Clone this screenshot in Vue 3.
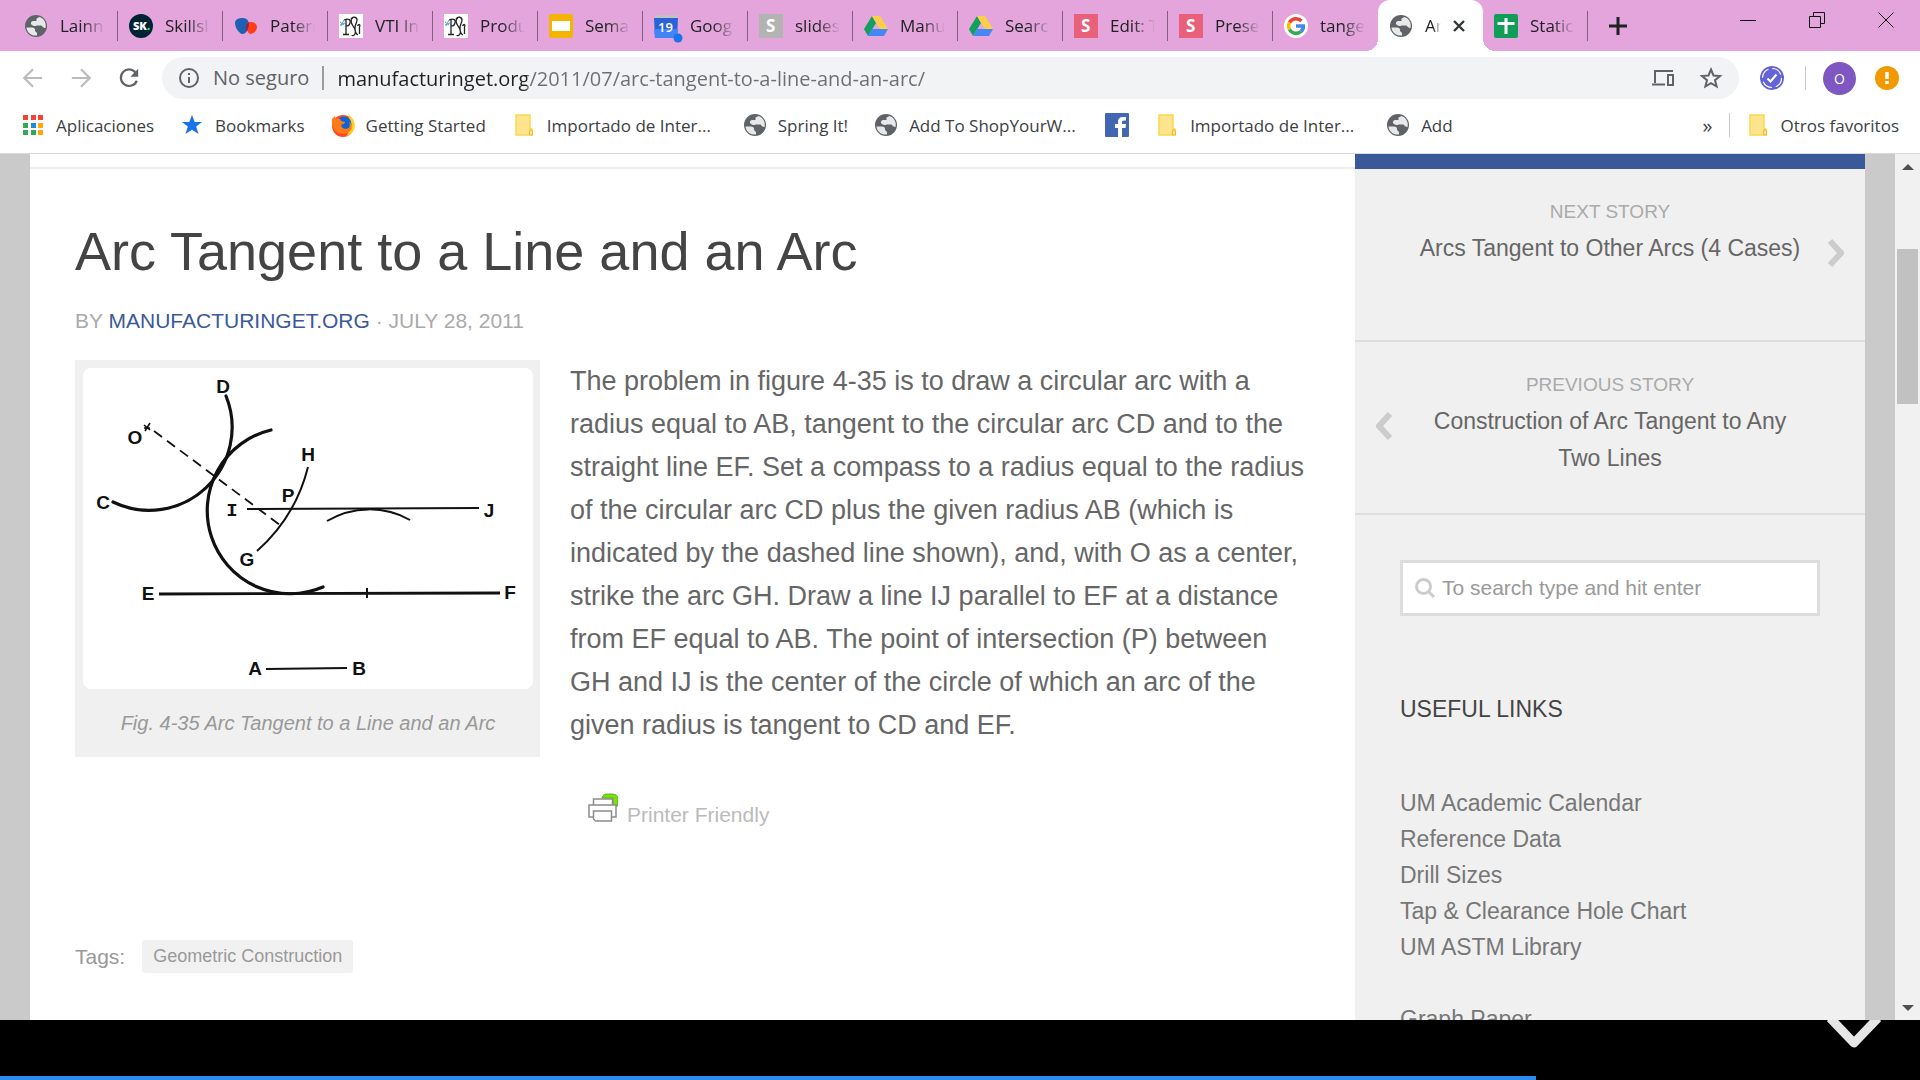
<template>
    <div class="screen">
        <header class="browser">
            <div class="tab-strip">
                <div v-for="(tab, i) in tabs" :key="i" class="tab" :class="{ active: tab.active, 'no-line': tab.noLine }">
                    <button class="tab-main">
                        <svg class="icon" viewBox="0 0 24 24"><use :href="'#i-' + tab.icon" /></svg>
                        <span class="tab-title">{{ tab.title }}</span>
                    </button>
                    <button v-if="tab.active" class="tab-close" aria-label="Cerrar">
                        <svg viewBox="0 0 12 12" width="12" height="12" stroke="#333639" stroke-width="2.4"><path d="M1 1l10 10M11 1L1 11" /></svg>
                    </button>
                </div>
                <button class="new-tab" aria-label="Nueva pestaña">
                    <svg viewBox="0 0 18 18" width="18" height="18" stroke="#202124" stroke-width="3"><path d="M9 0v18M0 9h18" /></svg>
                </button>
                <div class="window-buttons">
                    <button aria-label="Minimizar"><svg viewBox="0 0 16 16"><path d="M0 8.5h16" /></svg></button>
                    <button aria-label="Restaurar"><svg viewBox="0 0 16 16"><path d="M.5 4.5h11v11H.5zM4.500 4V.5h11v11H12" /></svg></button>
                    <button aria-label="Cerrar"><svg viewBox="0 0 16 16"><path d="M.5 .5l15 15M15.500 .5l-15 15" /></svg></button>
                </div>
            </div>

            <div class="toolbar">
                <button class="nav" aria-label="Atrás">
                    <svg viewBox="0 0 24 24" stroke="#b9bbbd"><path d="M22 12H3M12 2.500L2.500 12l9.500 9.500" /></svg>
                </button>
                <button class="nav" aria-label="Adelante">
                    <svg viewBox="0 0 24 24" stroke="#b9bbbd"><path d="M2 12h19M12 2.500l9.500 9.500-9.500 9.500" /></svg>
                </button>
                <button class="nav" aria-label="Recargar">
                    <svg viewBox="0 0 24 24" stroke="#5f6368" stroke-width="2.600">
                        <path d="M19.500 6.500A9 9 0 1 0 20.500 15" />
                        <path d="M22 2v8.500h-8.500z" fill="#5f6368" stroke="none" />
                    </svg>
                </button>
                <div class="omnibox">
                    <svg class="info" viewBox="0 0 24 24" fill="none" stroke="#5f6368" stroke-width="2">
                        <circle cx="12" cy="12" r="9" /><path d="M12 11v6M12 7v2" />
                    </svg>
                    <label class="secure" for="url">No seguro</label>
                    <input id="url" class="url" type="text" value="manufacturinget.org/2011/07/arc-tangent-to-a-line-and-an-arc/" />
                    <button class="plain" aria-label="Enviar a tus dispositivos">
                        <svg viewBox="0 0 24 24" fill="none" stroke="#5f6368" stroke-width="2">
                            <path d="M22 5H4v12M1 18.500h13" /><path d="M17 9h5v10h-5z" />
                        </svg>
                    </button>
                    <button class="plain" aria-label="Favorito">
                        <svg viewBox="0 0 24 24" fill="none" stroke="#5f6368" stroke-width="2">
                            <path d="M12 3.500l2.500 6 6.500.5-5 4.200 1.600 6.300L12 17.100l-5.600 3.400L8 14.200 3 10l6.500-.5z" />
                        </svg>
                    </button>
                </div>
                <button class="plain ext" aria-label="Extensión">
                    <svg viewBox="0 0 24 24" fill="none">
                        <circle cx="12" cy="12" r="12" fill="#6464d8" />
                        <circle cx="12" cy="12" r="9.500" stroke="#fff" stroke-width="1.200" stroke-dasharray="11 3.900" />
                        <path d="M7.500 12.500l3 3 6-7" stroke="#fff" stroke-width="2.200" />
                    </svg>
                </button>
                <span class="divider"></span>
                <button class="avatar">O</button>
                <button class="plain alert" aria-label="Actualizar">
                    <svg viewBox="0 0 24 24"><circle cx="12" cy="12" r="12" fill="#f29900" /><path d="M12 6v7M12 15v3" stroke="#fff" stroke-width="3.500" /></svg>
                </button>
            </div>

            <nav class="bookmarks">
                <a v-for="(mark, i) in bookmarks" :key="i" href="#" :class="{ cut: mark.cut }">
                    <svg class="icon" viewBox="0 0 24 24"><use :href="'#i-' + mark.icon" /></svg>
                    <span v-if="mark.title">{{ mark.title }}</span>
                </a>
                <div class="others">
                    <button class="more" aria-label="Más marcadores">»</button>
                    <span class="divider"></span>
                    <a href="#">
                        <svg class="icon" viewBox="0 0 24 24"><use href="#i-folder" /></svg>
                        <span>Otros favoritos</span>
                    </a>
                </div>
            </nav>
        </header>

        <div class="viewport">
            <div class="page">
                <main class="content">
                    <article>
                        <h1>Arc Tangent to a Line and an Arc</h1>
                        <p class="byline">BY <a href="#">MANUFACTURINGET.ORG</a> · JULY 28, 2011</p>
                        <div class="entry">
                            <figure>
                                <svg class="drawing" viewBox="0 0 450 321" fill="none" stroke="#111">
                                    <g stroke-width="3.200" stroke-linecap="round">
                                        <path d="M143 28A83 83 0 0 1 30 134" />
                                        <path d="M188 62A83 83 0 1 0 240 219" />
                                    </g>
                                    <path d="M76 226L417 225" stroke-width="2.800" />
                                    <path d="M284 220v10" stroke-width="2" />
                                    <g stroke-width="2">
                                        <path d="M225 99A166 166 0 0 1 174 183" />
                                        <path d="M164 141L396 140" />
                                        <path d="M183 301L264 300" />
                                        <path d="M244 153A83 83 0 0 1 327 152" />
                                    </g>
                                    <path d="M71 63L197 157" stroke-width="1.800" stroke-dasharray="10 6.200" />
                                    <path d="M61 57l6 5M67 55l-5 8M61 60h6" stroke-width="1.600" />
                                    <g class="points">
                                        <text v-for="p in points" :key="p.name" :x="p.x" :y="p.y + 7" :class="{ serif: p.name === 'I' }">{{ p.name }}</text>
                                    </g>
                                </svg>
                                <figcaption>Fig. 4-35 Arc Tangent to a Line and an Arc</figcaption>
                            </figure>
                            <div class="text">
                                <p>
                                    The problem in figure 4-35 is to draw a circular arc with a radius equal to AB, tangent to the
                                    circular arc CD and to the straight line EF. Set a compass to a radius equal to the radius of the
                                    circular arc CD plus the given radius AB (which is indicated by the dashed line shown), and, with
                                    O as a center, strike the arc GH. Draw a line IJ parallel to EF at a distance from EF equal to AB.
                                    The point of intersection (P) between GH and IJ is the center of the circle of which an arc of the
                                    given radius is tangent to CD and EF.
                                </p>
                                <a href="#" class="print">
                                    <svg viewBox="0 0 30 30" width="30" height="30">
                                        <path d="M14 5c1-4 4-4 8-4 5 0 8 1 8 5v7h-5V5z" fill="#7fe00c" stroke="#46b51c" />
                                        <g fill="#fff" stroke="#8c8c8c" stroke-width="1.500">
                                            <path d="M5.500 12V6h19v6" />
                                            <path d="M1 12h27v12H1z" />
                                            <path d="M5.500 18h18v10h-16l-2-2z" />
                                        </g>
                                    </svg>
                                    <span>Printer Friendly</span>
                                </a>
                            </div>
                        </div>
                        <div class="tags">
                            <span>Tags:</span>
                            <a href="#">Geometric Construction</a>
                        </div>
                    </article>
                </main>

                <aside class="sidebar">
                    <div class="blue-bar"></div>
                    <a href="#" class="story next">
                        <small>NEXT STORY</small>
                        <strong>Arcs Tangent to Other Arcs (4 Cases)</strong>
                        <svg viewBox="0 0 16 28"><path d="M2 2l11 12L2 26" /></svg>
                    </a>
                    <a href="#" class="story previous">
                        <small>PREVIOUS STORY</small>
                        <strong>Construction of Arc Tangent to Any Two Lines</strong>
                        <svg viewBox="0 0 16 28"><path d="M14 2L3 14l11 12" /></svg>
                    </a>
                    <div class="widgets">
                        <label class="search">
                            <svg viewBox="0 0 20 20" fill="none" stroke="#ccc" stroke-width="3"><circle cx="8.500" cy="8.500" r="7" /><path d="M13 13l6 6" /></svg>
                            <input type="text" placeholder="To search type and hit enter" aria-label="Search" />
                        </label>
                        <h3>USEFUL LINKS</h3>
                        <ul>
                            <li v-for="link in links" :key="link"><a href="#">{{ link }}</a></li>
                        </ul>
                        <ul>
                            <li><a href="#">Graph Paper</a></li>
                        </ul>
                    </div>
                </aside>
            </div>
            <div class="scrollbar">
                <svg viewBox="0 0 12 6"><path d="M0 6l6-6 6 6z" /></svg>
                <div class="track"><div class="thumb"></div></div>
                <svg viewBox="0 0 12 6"><path d="M0 0l6 6 6-6z" /></svg>
            </div>
        </div>

        <footer class="player">
            <svg class="chevron" viewBox="0 0 54 28"><path d="M3 -2L27 23 51 -2" /></svg>
            <div class="progress" :style="{ width: progress + '%' }"></div>
        </footer>

        <!-- icon sprite -->
        <svg class="sprite" aria-hidden="true">
            <symbol id="i-globe" viewBox="0 0 24 24">
                <circle cx="12" cy="12" r="11" fill="#5f6368" />
                <path d="M2.500 13.500h5c3 0 4 1.500 3.500 3.500l2 2v2.500C7 22 3 18.500 2.500 13.500zM9 11.500c-3-1-2.500-4 0-4.500h3.500V4.500l3-1.500c5 1.500 7 6.500 6 11-1.500.5-2.500-1-4-2.500h-5c-1 1-2.500.5-3.500 0z" fill="#fff" opacity=".85" />
            </symbol>
            <symbol id="i-sk" viewBox="0 0 24 24">
                <circle cx="12" cy="12" r="12" fill="#002333" />
                <text x="4" y="16" font-size="11" font-weight="900" fill="#fff">SK<tspan fill="#00ff84">.</tspan></text>
            </symbol>
            <symbol id="i-blobs" viewBox="0 0 24 24">
                <path d="M1 9c0-4 4-5 8-5s6 3 6 7-4 10-7 9S1 14 1 9z" fill="#1f5fb4" />
                <path d="M12 12c0-3 2-4 5-4s6 2 6 5-3 7-6 7-5-5-5-8z" fill="#ff3d17" />
                <path d="M15 8.500c0 4-1 7-2.500 8.500-1-4-1-7.500 2.500-8.500z" fill="#8c1f5c" />
            </symbol>
            <symbol id="i-vti" viewBox="0 0 24 24">
                <path d="M0 0h24v24H0z" fill="#fff" />
                <g fill="none" stroke="#222" stroke-width="1.300">
                    <path d="M7 6v14M4 20.500h6M5 6c5-2 7 0 6 3s-2 3-4 3" />
                    <path d="M14 4c-3 1-2 5 0 8s3 6 2 8-3 2-3 1M12 5c2-3 6-2 6 1s-2 4-2 8 1 6 3 7" />
                    <path d="M18.500 12c2-3 3-1 2 1v7" />
                </g>
                <path d="M1 8l4 3M5 6l-3 6M1 11l5-2" stroke="#4fa7d8" />
            </symbol>
            <symbol id="i-slides" viewBox="0 0 24 24">
                <rect width="24" height="24" rx="2" fill="#f4b400" /><path d="M3 7h18v10H3z" fill="#fff" />
            </symbol>
            <symbol id="i-calendar" viewBox="0 0 24 24" overflow="visible">
                <path d="M1 1h22v4H1z" fill="#c2c2c2" /><path d="M0 4h24l-1 20H1z" fill="#2a62d8" />
                <path d="M0 15h24l-1 9H1z" fill="#4284f3" />
                <text x="4" y="18" font-size="13" font-weight="600" fill="#fff">19</text>
                <circle cx="24" cy="24" r="4.500" fill="#1a73e8" />
            </symbol>
            <symbol id="i-sgray" viewBox="0 0 24 24">
                <path d="M0 0h24v24H0z" fill="#b3b3b3" /><text x="7" y="18" font-size="17" font-weight="700" fill="#fff">S</text>
            </symbol>
            <symbol id="i-sred" viewBox="0 0 24 24">
                <path d="M0 0h24v24H0z" fill="#e8607a" /><text x="7" y="18" font-size="17" font-weight="700" fill="#fff">S</text>
            </symbol>
            <symbol id="i-drive" viewBox="0 0 24 24">
                <path d="M8 2l4 7-8 13-4-7z" fill="#11a05e" /><path d="M8 2h8l8 13h-8z" fill="#ffcf48" /><path d="M8 15h16l-4 7H4z" fill="#4587f4" />
            </symbol>
            <symbol id="i-google" viewBox="0 0 24 24">
                <circle cx="12" cy="12" r="12" fill="#fff" />
                <g fill="none" stroke-width="3.500">
                    <path d="M17.500 7A7.500 7.500 0 0 0 5.500 8.500" stroke="#ea4335" />
                    <path d="M5.500 8.500a7.500 7.500 0 0 0 0 7" stroke="#fbbc05" />
                    <path d="M5.500 15.500a7.500 7.500 0 0 0 11.500 2" stroke="#34a853" />
                    <path d="M17 17.500c2-1.500 2.500-3.500 2.300-5.500H12" stroke="#4285f4" />
                </g>
            </symbol>
            <symbol id="i-sheets" viewBox="0 0 24 24">
                <rect width="24" height="24" rx="2" fill="#0f9d58" /><path d="M12 4v16M3.500 9.500h17" stroke="#fff" stroke-width="3" />
            </symbol>
            <symbol id="i-apps" viewBox="0 0 24 24">
                <path d="M2 2h5v5H2zM10 2h5v5h-5zM17 2h5v5h-5z" fill="#f44336" />
                <path d="M2 10h5v5H2zM2 17h5v5H2zM10 17h5v5h-5z" fill="#34a853" />
                <path d="M10 10h5v5h-5z" fill="#1e88e5" /><path d="M17 10h5v5h-5zM17 17h5v5h-5z" fill="#fba90a" />
            </symbol>
            <symbol id="i-star" viewBox="0 0 24 24">
                <path d="M12 2l2.700 7h7.300l-5.800 4.600L18.500 21 12 16.700 5.500 21l2.300-7.400L2 9h7.300z" fill="#1a73e8" />
            </symbol>
            <symbol id="i-firefox" viewBox="0 0 24 24">
                <circle cx="12" cy="13" r="11" fill="#ff4a26" />
                <path d="M17 1c4 3 8 8 6.500 14-1 4-4 6.500-8 8C20 17 20 9 17 1z" fill="#ffcf1f" />
                <circle cx="13" cy="11" r="7.500" fill="#0a65d8" />
                <path d="M1 6l3-3 1 3c3-1 5 0 5 2l4 1c0 2-3 2-4 3 1 5 6 4 8 3 1-3 1-5 0-7 5 5 3 12-5 13C5 21 0 15 1 6z" fill="#ff7a17" />
            </symbol>
            <symbol id="i-folder" viewBox="0 0 24 24">
                <path d="M4 2h14v14h2v6H4z" fill="#ffe48e" stroke="#fbd64f" stroke-width="1.500" />
                <path d="M17.500 22v-4c0-1.500 3-1.500 3 0v4z" fill="#ffe48e" stroke="#e9bc31" />
            </symbol>
            <symbol id="i-facebook" viewBox="0 0 24 24">
                <rect width="24" height="24" rx="1" fill="#4267b2" />
                <path d="M13 24v-9h-3v-4h3V8.500C13 5.500 15 4 17.500 4H21v3.500h-2c-1.500 0-2 .7-2 2V11h4l-.5 4H17v9z" fill="#fff" />
            </symbol>
        </svg>
    </div>
</template>

<script setup>
import { ref } from 'vue'

const tabs = [
    { icon: 'globe', title: 'Lainn' },
    { icon: 'sk', title: 'Skillsl' },
    { icon: 'blobs', title: 'Paterr' },
    { icon: 'vti', title: 'VTI In' },
    { icon: 'vti', title: 'Produ' },
    { icon: 'slides', title: 'Sema' },
    { icon: 'calendar', title: 'Goog' },
    { icon: 'sgray', title: 'slides' },
    { icon: 'drive', title: 'Manu' },
    { icon: 'drive', title: 'Searc' },
    { icon: 'sred', title: 'Edit: T' },
    { icon: 'sred', title: 'Prese' },
    { icon: 'google', title: 'tange', noLine: true },
    { icon: 'globe', title: 'Ar', active: true, noLine: true },
    { icon: 'sheets', title: 'Static' }
]

const bookmarks = [
    { icon: 'apps', title: 'Aplicaciones' },
    { icon: 'star', title: 'Bookmarks' },
    { icon: 'firefox', title: 'Getting Started' },
    { icon: 'folder', title: 'Importado de Inter...', cut: true },
    { icon: 'globe', title: 'Spring It!' },
    { icon: 'globe', title: 'Add To ShopYourW...', cut: true },
    { icon: 'facebook', title: '' },
    { icon: 'folder', title: 'Importado de Inter...', cut: true },
    { icon: 'globe', title: 'Add' }
]

const points = [
    { name: 'D', x: 140, y: 18 },
    { name: 'O', x: 52, y: 69 },
    { name: 'C', x: 20, y: 134 },
    { name: 'H', x: 225, y: 86 },
    { name: 'P', x: 205, y: 127 },
    { name: 'I', x: 149, y: 141 },
    { name: 'J', x: 406, y: 142 },
    { name: 'G', x: 164, y: 191 },
    { name: 'E', x: 65, y: 225 },
    { name: 'F', x: 427, y: 224 },
    { name: 'A', x: 172, y: 300 },
    { name: 'B', x: 276, y: 300 }
]

const links = ['UM Academic Calendar', 'Reference Data', 'Drill Sizes', 'Tap & Clearance Hole Chart', 'UM ASTM Library']

const progress = ref(80)
</script>

<style>
body {
    margin: 0;
}
</style>

<style scoped>
.screen {
    height: 100vh;
    display: flex;
    flex-direction: column;
    overflow: hidden;
    background: #fff;
    font-family: "Liberation Sans", Arial, sans-serif;
}

a {
    color: inherit;
    text-decoration: none;
}

button {
    padding: 0;
    border: none;
    background: none;
    font: inherit;
    color: inherit;
    cursor: pointer;
}

.sprite {
    display: none;
}

.icon {
    width: 24px;
    height: 24px;
    flex: none;
    overflow: visible;
}

/* 浏览器外框 */
.browser {
    flex: none;
    font-family: "Segoe UI", "Open Sans", sans-serif;
    font-size: 17px;
    color: #3c4043;
    border-bottom: 1px solid #d9dadc;
}

.tab-strip {
    display: flex;
    height: 51px;
    padding-left: 13px;
    background: #e3a5dc;
    color: #202124;
}

.tab {
    position: relative;
    display: flex;
    align-items: center;
    width: 105px;
    box-sizing: border-box;
    padding: 0 13px 0 11px;
}

.tab::after {
    content: "";
    position: absolute;
    right: 0;
    top: 11px;
    width: 1px;
    height: 30px;
    background: #80607f;
}

.tab.no-line::after {
    display: none;
}

.tab-main {
    display: flex;
    align-items: center;
    gap: 12px;
    min-width: 0;
    flex: 1;
}

.tab-title {
    flex: 1;
    overflow: hidden;
    white-space: nowrap;
    text-align: left;
    -webkit-mask-image: linear-gradient(to right, #000 50%, transparent);
    mask-image: linear-gradient(to right, #000 50%, transparent);
}

.tab.active {
    gap: 12px;
    padding-right: 18px;
    background: #fff;
    border-radius: 12px 12px 0 0;
}

/* 当前标签底部的圆角 */
.tab.active::before {
    content: "";
    position: absolute;
    left: -12px;
    right: -12px;
    bottom: 0;
    height: 12px;
    background:
        radial-gradient(circle at 0 0, transparent 12px, #fff 12px) left / 12px 12px no-repeat,
        radial-gradient(circle at 100% 0, transparent 12px, #fff 12px) right / 12px 12px no-repeat;
}

.tab-close {
    display: flex;
}

.new-tab {
    display: flex;
    align-items: center;
    padding: 0 21px;
}

.window-buttons {
    display: flex;
    height: 42px;
    margin-left: auto;
}

.window-buttons button {
    width: 69px;
}

.window-buttons svg {
    width: 16px;
    height: 16px;
    fill: none;
    stroke: #111;
}

.toolbar {
    display: flex;
    align-items: center;
    padding: 6px 21px 6px 9px;
}

.nav {
    display: flex;
    justify-content: center;
    width: 48px;
}

.nav svg {
    width: 22px;
    height: 22px;
    fill: none;
    stroke-width: 2.4;
}

.omnibox {
    display: flex;
    align-items: center;
    flex: 1;
    height: 42px;
    margin: 0 21px 0 9px;
    padding: 0 16px 0 15px;
    box-sizing: border-box;
    border-radius: 21px;
    background: #f1f3f4;
    font-size: 20px;
}

.info {
    width: 24px;
    height: 24px;
}

.secure {
    margin-left: 12px;
    padding-right: 13px;
    border-right: 2px solid #9a9da0;
    line-height: 24px;
    color: #5f6368;
}

.url {
    flex: 1;
    min-width: 0;
    margin-left: 13px;
    padding: 0;
    border: none;
    outline: none;
    font: inherit;
    color: transparent;
    /* 域名深色，路径浅色 */
    background: linear-gradient(to right, #202124 190px, #6b6f73 190px);
    -webkit-background-clip: text;
    background-clip: text;
}

.plain {
    display: flex;
    width: 24px;
    height: 24px;
}

.plain svg {
    width: 24px;
    height: 24px;
}

.omnibox .plain + .plain {
    margin-left: 24px;
}

.divider {
    width: 1px;
    height: 24px;
    background: #c8cacc;
}

.ext {
    margin-right: 21px;
}

.avatar {
    width: 33px;
    height: 33px;
    margin: 0 19px 0 17px;
    border-radius: 50%;
    background: #7e57c2;
    color: #fff;
    font-size: 14px;
}

.bookmarks {
    display: flex;
    align-items: center;
    gap: 26px;
    height: 40px;
    padding: 0 21px 8px;
    white-space: nowrap;
}

.bookmarks a {
    display: flex;
    align-items: center;
    gap: 11px;
}

.bookmarks .cut span {
    min-width: 170px;
}

.others {
    display: flex;
    align-items: center;
    gap: 16px;
    margin-left: auto;
}

.more {
    font-size: 20px;
}

/* 页面 */
.viewport {
    display: flex;
    flex: 1;
    min-height: 0;
    background: #cacaca;
}

.page {
    display: flex;
    flex: 1;
    min-width: 0;
    margin: 0 30px;
    overflow: hidden;
}

.content {
    flex: 1;
    min-width: 0;
    padding-top: 13px;
    background: #fff;
}

article {
    padding: 47px 45px 0;
    border-top: 2px solid #eee;
}

h1 {
    margin: 0;
    font-size: 54px;
    font-weight: 400;
    line-height: 70px;
    color: #444;
}

.byline {
    margin: 23px 0 27px;
    font-size: 21px;
    line-height: 24px;
    color: #aaa;
}

.byline a {
    color: #3b5998;
}

.entry {
    display: flex;
    align-items: flex-start;
    gap: 30px;
}

figure {
    flex: none;
    width: 450px;
    margin: 0;
    padding: 8px 7px 19px 8px;
    background: #f0f0f0;
}

.drawing {
    display: block;
    width: 100%;
    border-radius: 8px;
    background: #fff;
}

.points text {
    font-size: 19px;
    font-weight: 700;
    text-anchor: middle;
    fill: #111;
    stroke: none;
}

.points .serif {
    font-family: "Liberation Mono", monospace;
}

figcaption {
    margin-top: 19px;
    font-size: 20px;
    font-style: italic;
    line-height: 30px;
    text-align: center;
    color: #999;
}

.text {
    flex: 1;
    min-width: 0;
}

.text p {
    margin: 0;
    font-size: 27px;
    line-height: 43px;
    color: #666;
}

.print {
    display: inline-flex;
    align-items: center;
    gap: 9px;
    margin: 41px 0 0 18px;
    font-size: 21px;
    color: #bbb;
}

.print span {
    padding-top: 15px;
}

.tags {
    display: flex;
    align-items: center;
    gap: 17px;
    margin-top: 113px;
    font-size: 21px;
    color: #999;
}

.tags a {
    padding: 0 11px;
    border-radius: 3px;
    background: #f1f1f1;
    font-size: 18px;
    line-height: 33px;
}

/* 侧边栏 */
.sidebar {
    flex: none;
    width: 510px;
    background: #f0f0f0;
}

.blue-bar {
    height: 15px;
    background: #3b5998;
}

.story {
    position: relative;
    display: block;
    height: 141px;
    padding: 30px 60px 0;
    border-bottom: 2px solid #ddd;
    text-align: center;
    color: #666;
}

.story small {
    display: block;
    font-size: 19px;
    line-height: 26px;
    color: #aaa;
}

.story strong {
    display: block;
    padding-top: 5px;
    font-size: 23px;
    font-weight: 400;
    line-height: 37px;
}

.story svg {
    position: absolute;
    top: 70px;
    width: 16px;
    height: 28px;
    fill: none;
    stroke: #ccc;
    stroke-width: 6;
}

.next svg {
    right: 21px;
}

.previous svg {
    left: 21px;
}

.widgets {
    padding: 45px 45px 0;
}

.search {
    display: flex;
    align-items: center;
    gap: 7px;
    height: 50px;
    padding: 0 12px;
    border: 3px solid #ddd;
    background: #fff;
}

.search svg {
    width: 20px;
    height: 20px;
}

.search input {
    flex: 1;
    min-width: 0;
    padding: 0;
    border: none;
    outline: none;
    font: inherit;
    font-size: 21px;
    background: none;
}

.search input::placeholder {
    color: #999;
}

h3 {
    margin: 77px 0 60px;
    font-size: 23px;
    font-weight: 400;
    line-height: 32px;
    color: #444;
}

ul {
    margin: 0 0 36px;
    padding: 0;
    list-style: none;
    font-size: 23px;
    line-height: 36px;
    color: #777;
}

.scrollbar {
    display: flex;
    flex-direction: column;
    align-items: center;
    width: 25px;
    padding: 10px 0 9px;
    box-sizing: border-box;
    background: #f1f1f1;
}

.scrollbar svg {
    width: 12px;
    height: 6px;
    flex: none;
    fill: #505050;
}

.track {
    flex: 1;
    width: 21px;
}

.thumb {
    height: 155px;
    margin-top: 79px;
    background: #c1c1c1;
}

/* 底部播放条 */
.player {
    position: relative;
    flex: none;
    height: 60px;
    background: #000;
}

.chevron {
    position: absolute;
    top: 0;
    right: 39px;
    width: 54px;
    height: 28px;
    fill: none;
    stroke: #e6e6e6;
    stroke-width: 9;
    stroke-linejoin: round;
}

.progress {
    position: absolute;
    left: 0;
    bottom: 0;
    height: 4px;
    background: #2d8cf0;
}
</style>
